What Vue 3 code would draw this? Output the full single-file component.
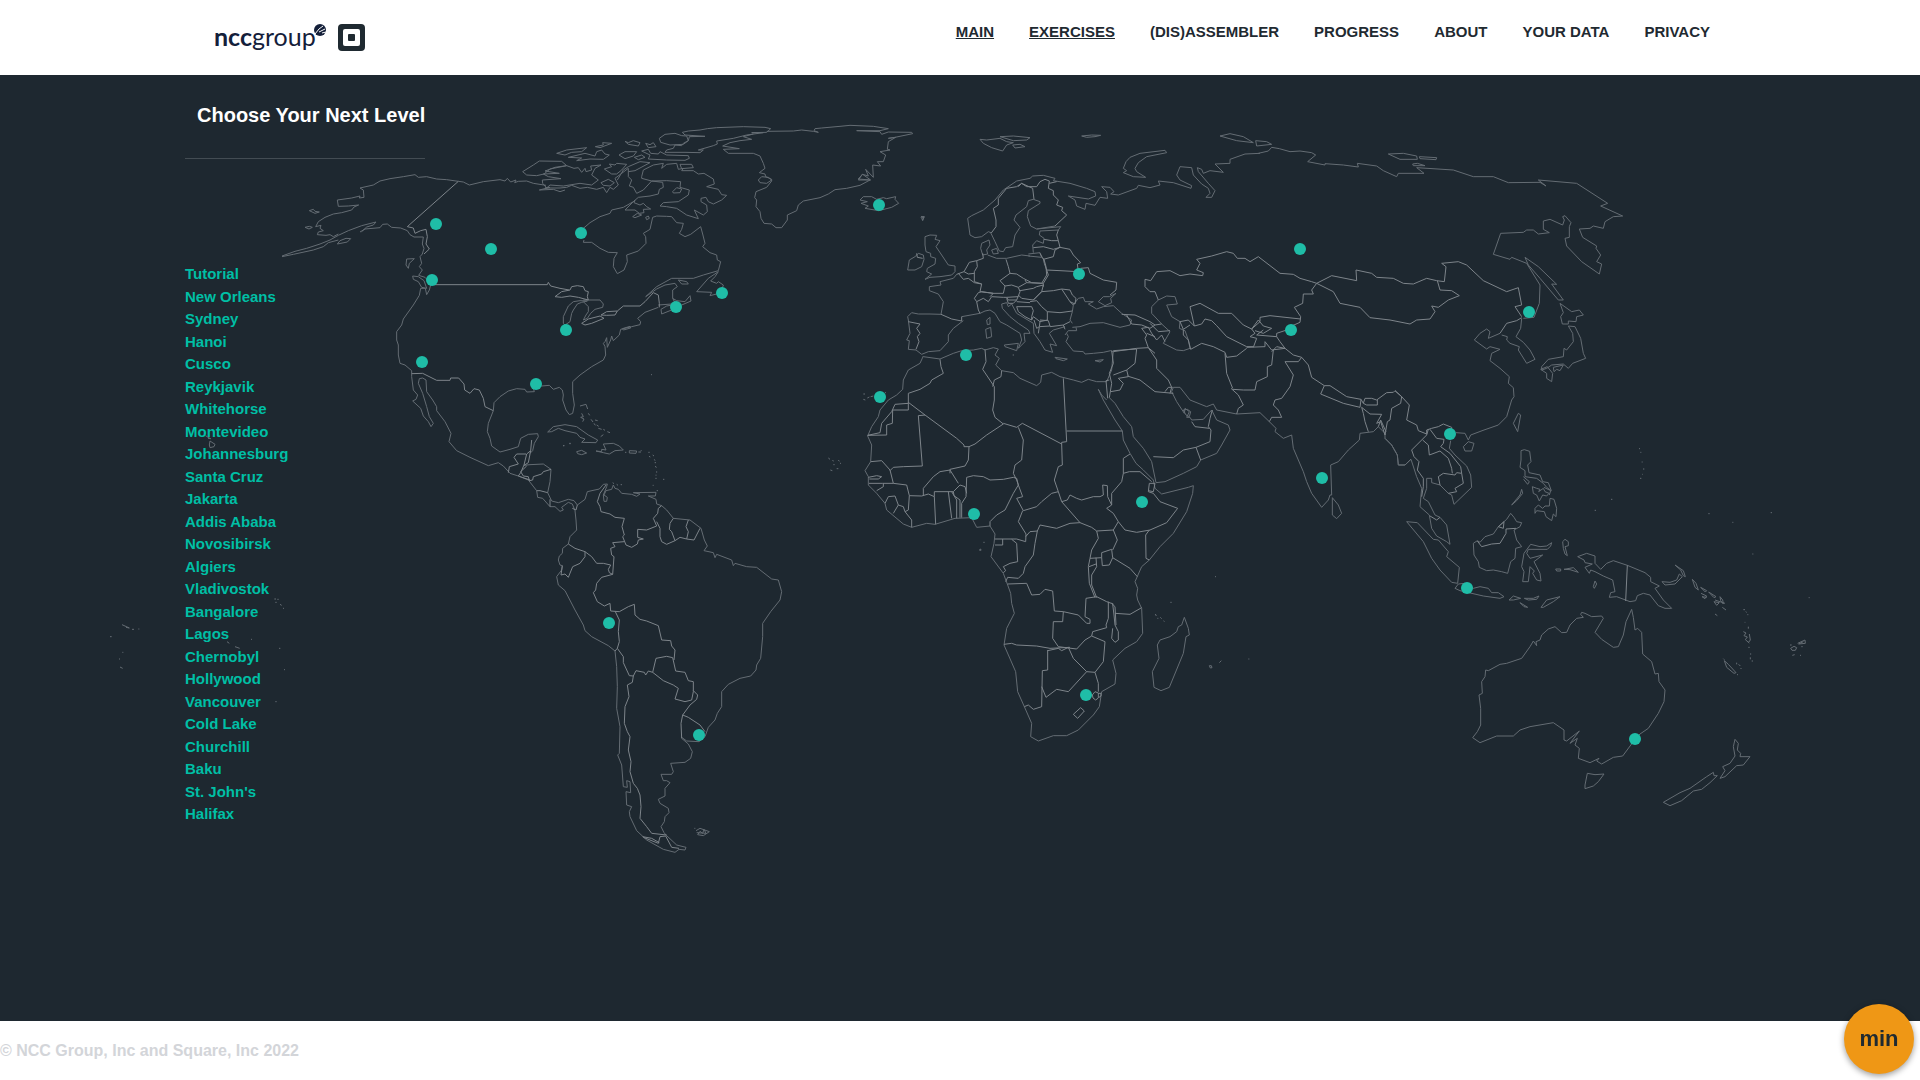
<script setup>
const navItems = [
  { label: 'MAIN', underlined: true },
  { label: 'EXERCISES', underlined: true },
  { label: '(DIS)ASSEMBLER' },
  { label: 'PROGRESS' },
  { label: 'ABOUT' },
  { label: 'YOUR DATA' },
  { label: 'PRIVACY' },
]

const levels = [
  'Tutorial', 'New Orleans', 'Sydney', 'Hanoi', 'Cusco', 'Reykjavik', 'Whitehorse',
  'Montevideo', 'Johannesburg', 'Santa Cruz', 'Jakarta', 'Addis Ababa', 'Novosibirsk',
  'Algiers', 'Vladivostok', 'Bangalore', 'Lagos', 'Chernobyl', 'Hollywood', 'Vancouver',
  'Cold Lake', 'Churchill', 'Baku', "St. John's", 'Halifax',
]

const pins = [
  [436, 224], [491, 249], [581, 233], [432, 280], [722, 293], [676, 307], [566, 330],
  [422, 362], [536, 384], [879, 205], [609, 623], [699, 735], [1079, 274], [966, 355],
  [880, 397], [974, 514], [1142, 502], [1086, 695], [1300, 249], [1291, 330], [1529, 312],
  [1450, 434], [1322, 478], [1467, 588], [1635, 739],
]

// Each region is drawn at three times map scale from its own origin.
const regions = [
  {
    name: 'north-america',
    x: 270,
    y: 110,
    coast: [
      'M36,438 L75,424 110,415 150,402 180,390 205,376 235,362 275,347 318,336 310,345 290,351 275,365 M36,440 L70,433 130,420 160,410 175,398 205,390',
      'M202,402 L210,392 228,385 242,386 232,396Z M105,352 L118,349 127,352 117,357Z M118,302 L130,298 135,304 148,306 135,310Z',
      'M270,366 L285,357 330,353 338,343 352,342 365,352 392,354 412,362 420,374 432,381 460,381 457,402 462,415 457,432 450,440 455,460 448,470 457,480 446,496 465,502 482,520',
      'M205,372 L190,380 180,374 168,376 142,374 145,366 160,362 150,355 153,346 137,350 145,335 165,322 190,312 215,308 245,300 252,291 266,285 235,288 205,289 202,270 245,264 270,258 268,264 282,262 280,240 270,234 310,225 330,213 360,206 400,200 435,194 445,202 470,200 500,207 530,209 565,214 580,216 598,225 640,215 690,209 705,213 712,205 722,216 738,210 734,218 745,214 770,213 790,220 828,226',
      'M482,525 L478,540 470,554 466,535 452,535 448,556 430,585 400,627 395,645 380,665 380,690 385,705 385,735 390,760 405,765 425,782 425,800 430,840 443,855 438,868 428,873 452,895 460,918 475,935 483,950 490,940 478,920 470,890 458,850 445,820 448,806 458,804 468,810 470,845 488,870 500,890 500,902 525,935 543,970 537,995 560,1022 600,1042 655,1067 685,1058 700,1068 720,1090',
      'M428,498 L445,500 462,512 470,535 455,532 445,515 430,508Z M410,447 L433,446 418,460 415,475 408,465Z',
      'M670,902 L672,878 690,860 715,843 740,836 765,838 770,846 793,845 790,835 815,828 838,826 850,838 868,832 877,840 880,855 878,870 888,900 898,914 908,910 913,885 908,850 908,815 930,795 965,770 1000,750 1007,735 1005,710 1000,700 1005,695 1010,683 1012,712 1022,690 1025,678 1030,692 1048,675 1052,658 1085,650 1110,644 1112,635 1103,625 1125,607 1165,592',
      'M1057,656 L1080,649 1082,654 1060,660Z',
      'M670,902 L655,940 652,965 660,985 665,1008 690,1026 720,1018 745,1010 752,985 775,973 803,971 805,980 793,1000 788,1022 780,1030',
      'M833,966 L850,950 885,944 920,950 955,975 983,990 978,998 935,997 945,987 930,982 920,970 885,962 865,955 845,965Z',
      'M930,888 L948,883 953,897 M935,910 l5,10 -8,2 10,5 -4,8 M955,910 l4,6 M963,928 l6,8 M975,930 l8,2 M972,940 l4,6 M980,945 l6,4 M985,955 l10,3 M1000,958 l5,3 M992,980 l8,-6 M1012,965 l8,3 M879,1007 h4 M898,1001 h4 M1143,794 h3',
    ],
    borders: [
      'M565,214 L412,350 430,354 435,370 452,362 468,358 472,380 468,402 478,417 462,432',
      'M490,524 L832,524 835,517 842,528 870,535 898,540',
      'M425,791 L458,790 500,811 540,811 542,804 566,804 582,822 584,840 600,850 612,836 628,840 640,865 645,890 670,902',
    ],
  },
  {
    name: 'arctic',
    x: 500,
    y: 100,
    coast: [
      'M68,215 L100,195 118,183 185,184 200,197 150,207 132,222 110,227 80,225Z',
      'M200,197 L222,205 235,203 245,217 255,205 258,215 275,210 272,198 303,195 285,205 275,225 295,240 275,255 240,250 190,258 150,255 140,264 128,250 127,240 183,236 145,230 130,222 178,220 135,213 165,202 200,197',
      'M118,270 L150,262 135,264 180,264 200,262 215,256 240,265 262,262 290,268 310,262 320,278 330,262 340,268 355,255 345,235 385,205 385,230 395,240 388,258 400,262 410,280 430,270 455,243 M118,270 L160,268 180,275 195,270',
      'M303,248 L325,238 343,248 330,258 310,256Z M313,207 L335,200 328,192 345,195 350,190 380,193 365,210 350,222 335,222Z',
      'M352,240 L370,210 385,200 420,185 450,188 405,212 385,215',
      'M425,230 L430,210 460,195 490,190 485,205 500,193 530,190 535,208 550,205 545,212 580,212 595,222 612,220 640,237 643,252 620,260 655,268 665,284 680,286 665,300 640,312 625,305 618,292 603,295 603,305 620,315 622,335 610,345 583,330 595,356 560,345 530,325 500,320 480,318 490,308 535,305 565,285 568,270 540,262 542,245 500,242 455,243 425,235Z',
      'M455,243 L488,247 490,262 478,268 475,282 450,288 415,292 400,305 370,322 335,330 330,340 300,350 270,368 250,385 M252,420 L250,427 275,427 300,445 325,457 352,458 342,475 340,500 352,521 372,510 382,485 380,465 415,453 438,430 437,410 430,400 450,388 458,352 470,348 500,349 515,350 530,368 550,370 545,388 538,400 555,410 572,403 602,380 608,402 615,430 608,440 630,458 650,465 652,480 662,485 655,512 610,525 580,535 515,535 470,560 437,590',
      'M375,330 L405,300 402,308 420,315 430,310 440,320 452,327 430,328 432,338 418,340 405,330Z M398,350 L412,340 425,345 405,353Z M437,352 L445,348 448,355 440,359Z M518,275 L530,263 545,267 540,278 520,279Z',
      'M478,115 L495,103 525,100 545,107 560,108 565,122 550,133 510,135 482,127Z',
      'M547,97 L565,93 600,90 622,86 650,83 730,80 795,82 812,86 800,97 755,98 790,98 740,105 700,115 650,123 652,132 640,137 595,150 610,150 600,158 555,157 495,157 500,150 520,145 525,135 545,137 550,130 565,122 568,110 615,109 555,105 547,97',
      'M425,153 L445,148 452,160 475,162 480,155 500,165 565,167 568,175 555,181 500,180 445,177 450,165Z M540,193 L575,193 580,203 545,206Z',
      'M357,165 L375,155 410,155 400,168 375,176Z M403,172 L425,165 435,172 415,179Z M375,124 L385,128 400,122 420,128 415,138 385,133Z M437,130 L450,134 460,128 468,140 445,143Z M286,140 L310,135 308,128 335,130 300,143Z',
      'M170,160 L200,150 260,143 245,155 215,157 195,165Z M205,172 L255,160 285,168 290,155 305,150 315,162 328,165 310,178 270,177 230,182 245,174Z',
      'M800,94 L880,93 905,90 940,94 955,97 942,92 945,86 965,84 1020,79 1050,76 1120,79 1165,86 1140,92 1070,92 1140,95 1145,103 1165,96 1235,97 1238,101 1185,112 1165,115 1187,112 1165,125 1162,148 1170,150 1140,155 1157,165 1150,185 1132,185 1142,198 1118,195 1120,232 1097,208 1105,228 1088,223 1112,240 1075,237 1088,222 1075,240 1110,240 1080,256 1040,265 1005,269 985,282 960,293 910,303 895,315 890,332 862,345 862,360 845,383 828,383 815,372 792,370 783,355 780,335 768,320 770,300 764,293 768,275 800,262 815,243 815,238 797,230 795,222 778,218 795,205 790,190 780,168 760,160 685,160 670,148 718,146 668,138 690,128 720,122 755,118 730,110 760,102',
      'M775,240 L785,230 805,232 815,240 800,250 780,248Z',
      'M1080,300 L1090,290 1115,290 1130,298 1150,293 1160,296 1187,290 1185,298 1196,310 1175,322 1136,332 1095,325 1105,318 1083,310 1102,305Z',
      'M1262,352 l10,-2 -5,10 M1264,350 l8,4',
      'M190,670 L190,650 205,618 220,605 240,602 262,603 245,607 232,612 220,630 215,640 210,665 195,675Z',
      'M250,600 L300,600 310,612 308,622 285,628 272,640 262,655 250,660 258,645 265,635 265,620 250,605',
      'M483,628 L500,618 528,613 518,595 530,602 555,605 570,587 573,603 545,615 510,632 485,642Z M437,590 L470,567 495,555 525,550 532,560 518,570 518,595 M535,540 L560,545 565,552 545,552Z',
      'M655,515 L625,535 590,575 635,577 630,587 650,582 M667,565 L670,555 655,545 650,550 632,543 645,530 655,515 M475,615 L515,612',
    ],
    borders: [
      'M165,590 L185,575 210,570 215,560 232,557 250,560 255,572 265,575 262,590 265,600 235,592 210,588 185,592Z',
      'M245,670 L265,657 300,648 312,655 275,670 255,675Z M303,645 L320,635 352,633 345,645 320,646Z',
      'M352,633 L370,618 420,618 435,605 460,578 475,585 478,610 478,622',
    ],
  },
  {
    name: 'south-america',
    x: 500,
    y: 440,
    coast: [
      'M72,76 L90,74 130,72 153,88 150,125 143,158 155,183 175,188 205,178 222,182 232,195',
      'M30,100 L55,108 85,120 110,152 113,172 128,175 150,200 165,200 180,214 190,210 185,202 205,187 217,192 225,212 228,240 230,270 210,290 205,312 188,325 187,340 178,348 175,360 180,375 187,377 185,390 170,410 175,435 195,452 225,510 250,555 255,572 275,590 325,617 345,633 350,680 352,740 350,805 360,860 358,940 353,945 365,975 370,1040 382,1042 380,1022 390,1025 392,1058 378,1055 380,1095 395,1100 388,1115 390,1130 410,1172 440,1200 490,1228 525,1237 537,1228 555,1230 558,1222 530,1215 500,1187 492,1178 483,1160 493,1145 495,1130 507,1118 505,1105 480,1090 475,1078 495,1068 495,1045 510,1028 500,1022 490,1022 483,1003 515,1003 520,995 512,970 555,967 572,955 577,935 565,912 545,895',
      'M545,892 L560,903 597,905 615,890 625,862 645,840 652,820 665,800 665,755 685,733 720,715 752,708 768,690 770,675 782,655 788,590 788,550 812,515 840,480 845,455 835,420 815,417 770,382 740,380 705,370 700,377 695,360 650,343 645,353 640,338 612,332 622,318 613,300 603,265 570,240 520,235 500,210 485,197 470,192 468,178 445,168 466,168 468,157 400,158 420,162 410,169 395,163 365,160 355,148 345,145 340,135 335,148 318,152 312,165 322,172 320,184 312,184 310,165 320,140 322,132 310,133 298,147 262,155 255,178 232,195',
      'M288,33 L305,35 305,28 318,30 310,12 340,10 358,18 370,30 345,32 328,42 310,38Z M230,35 L245,31 260,39 245,44 233,41Z M388,32 L410,33 408,40 388,39Z',
      'M375,37 h4 M415,36 h8 M422,32 h3 M445,37 h4 M447,49 l4,2 M458,45 l4,3 M463,58 l2,4 M464,68 h4 M466,78 l3,5 M470,94 v4 M468,104 v3 M466,115 h4 M489,118 h4 M458,136 h3 M470,152 h4 M338,128 l4,3 M350,133 l4,3 M362,134 h4 M189,17 h4 M208,10 h4',
      'M583,1165 h3 M588,1172 L600,1165 628,1175 610,1187 593,1184 600,1174 608,1180 612,1168 618,1180 590,1178',
      'M985,54 l5,4 M998,60 l2,4 M1000,74 h4 M1015,60 l3,4 M1010,86 h5 M991,90 l6,2',
    ],
    borders: [
      'M25,98 L28,80 55,72 42,52 50,42 78,42 M92,32 L80,42 72,75 62,98 55,108 90,120 M95,0 L92,32 85,68 72,76',
      'M153,88 L130,95 125,102 100,110 98,120 88,122 85,110 70,108 62,95 80,78 M110,152 L120,152 143,158 M150,200 L150,178 M232,195 L228,210 217,205',
      'M318,135 L300,160 292,185 300,200 303,215 330,222 345,232 373,235 366,260 373,285 368,290 378,315 395,322 412,312 415,300 430,297 413,292 413,268 440,270 470,258 460,235 473,220 475,205 485,197',
      'M470,245 L480,265 480,290 485,305 500,313 525,302 515,275 508,268 510,250 520,235 M525,302 L540,292 560,297 565,275 558,260 565,240 M560,297 L582,300 600,265',
      'M372,305 L338,308 345,320 332,325 335,345 342,350 338,403 328,398 325,388 332,375 310,370 290,370 275,350 255,335 225,325 205,312 M255,335 L255,350 240,370 218,380 205,412 195,402 183,405 187,377',
      'M338,403 L305,412 290,430 287,450 280,458 292,485 313,498 330,490 332,513 358,515 385,500 403,493 405,525 420,538 440,543 475,557 485,600 512,602 515,618 525,630 522,660 M345,513 L358,540 355,575 358,605 352,625 345,633',
      'M352,625 L370,650 370,668 388,707 400,708 408,692 433,697 437,705 445,693 458,697 468,655 500,649 518,653 527,693 555,697 565,722 580,725 580,755 575,780 555,785 525,777 535,745 520,735 490,722 458,697',
      'M580,752 L593,765 590,778 570,795 548,825 543,850 545,895 M548,825 L565,832 600,855 615,875',
      'M400,708 L397,727 382,735 387,770 375,800 373,850 382,875 390,890 385,930 393,965 390,995 400,1030 412,1045 420,1065 423,1100 420,1135 440,1160 455,1180 500,1185 M430,1192 L475,1210 480,1190 497,1188 515,1222 537,1225 M428,1190 L455,1195 478,1208',
    ],
  },
  {
    name: 'europe',
    x: 840,
    y: 120,
    coast: [
      'M420,58 L440,60 480,55 500,65 520,68 500,75 488,93 455,83 430,70Z M480,50 L520,48 570,53 560,60 520,62Z M518,75 L540,73 555,80 525,84Z M725,48 L755,45 782,46 765,50 740,52Z',
      'M850,158 L860,152 850,145 858,125 870,112 900,100 975,91 980,98 920,110 895,128 885,145 890,155 917,172 880,170Z',
      'M453,338 L445,335 425,350 405,353 390,345 383,295 395,287 430,270 465,240 490,210 530,183 570,175 578,168 610,166 645,175 640,182 690,190 740,205 765,215 767,228 745,237 685,228 705,240 710,258 735,268 738,250 765,256 780,232 803,235 800,215 785,200 810,202 822,215 812,222 835,225 890,205 895,196 930,203 960,195 955,183 1000,188 1053,205 1055,197 1020,180 1010,165 1020,140 1055,143 1060,165 1085,192 1105,205 1110,220 1098,232 1115,232 1125,212 1105,190 1075,155 1072,143 1085,148 1090,160 1110,152 1150,157 1125,132 1170,130 1170,118 1215,102 1260,100',
      'M453,340 L465,365 478,393 490,395 497,383 518,380 525,345 540,322 522,300 528,285 560,260 565,242 580,238 600,245 600,250 565,272 562,290 572,318 590,327 645,318',
      'M428,405 L422,385 425,370 447,360 450,375 440,390 443,402Z M455,390 L470,385 475,400 460,402Z M443,405 L470,415 500,415 545,405 570,408 M565,402 L600,398 605,412 565,408 M580,398 L578,375 590,362 610,370 612,355 598,345 600,333 655,330 662,320 590,327',
      'M350,463 L340,475 300,485 303,495 268,500 268,512 295,522 310,545 303,583 M365,590 L420,580 435,573 450,570 465,580 480,605 500,615 540,640 545,660 535,685 555,665 552,640 570,640 565,630 535,610 510,590 487,565 485,552 500,548 505,560 515,552 530,580 555,595 580,610 582,640 600,665 615,690 638,697 630,672 650,677 640,660 628,640 640,630 675,620',
      'M493,675 L535,670 530,692 495,680Z M437,628 L452,622 455,650 440,655Z M440,600 L450,592 450,612 442,614Z M645,712 L682,717 670,722 648,716Z M765,722 L790,719 780,726Z M518,705 h4',
      'M697,610 L690,600 697,575 700,555 715,535 730,532 735,545 760,545 745,552 770,567 790,560 820,557 845,580 875,600 870,615 840,622 790,608 750,610 720,620 697,622 M775,545 L790,530 808,530 828,520 812,535 815,548 795,557 775,545',
      'M675,645 L685,632 710,632 708,622 M680,640 L685,650 678,665 700,693 730,695 735,702 760,700 790,697 812,692 820,695 M820,692 L815,750',
      'M965,612 L935,580 935,560 955,540 980,528 1005,530 1012,552 980,555 995,590 1020,605 1018,625 1035,632 1045,660 1050,685 1030,692 1010,690 970,670 990,635 965,612',
      'M303,583 L270,582 235,582 215,578 203,590 205,600 210,640 200,660 208,662 205,688 228,690 245,703 265,695 300,692 325,665 325,645 340,625 370,602',
      'M255,350 L270,345 290,346 285,358 300,362 288,380 305,405 325,435 345,438 345,455 335,465 300,470 270,472 255,478 275,462 260,455 262,445 285,432 287,415 272,410 272,400 258,395 255,375Z M203,450 L208,420 225,410 235,400 250,405 252,418 245,440 225,450Z',
      'M250,710 L300,717 340,700 365,692 400,690 425,685 435,690 460,683 475,687 465,705 478,715 467,735 485,752 520,758 540,775 590,797 602,787 605,765 635,757 660,770 700,780 725,787 745,778 770,785 800,785 815,750',
      'M70,822 h5 M70,838 l6,2 M82,834 l6,-3 M92,830 l8,-2 M135,818 h3 M243,290 l10,0 -5,12 -3,-8',
    ],
    borders: [
      'M453,340 L468,320 468,300 460,265 475,255 475,235 500,205 530,200 545,190 578,205 582,238 M535,200 L545,190 560,200 590,200 600,185 615,178 628,183 625,205 640,212 640,225 655,240 650,255 668,262 665,272 680,285 645,318 M628,190 L650,185',
      'M230,400 L232,412 248,415 M655,330 L650,345 655,362 635,362 612,358 M655,362 L660,382 640,388 610,380 580,383 M660,382 L645,390 640,410 610,418 600,400 M660,382 L690,388 700,405 722,428 712,432 715,455 660,452 620,450 613,430 610,415',
      'M498,418 L505,440 510,460 530,462 550,475 575,488 605,490 620,465 618,440 612,418 M410,422 L412,440 403,455 403,485 425,492 420,515 460,520 490,520 495,498 480,482 510,460 M428,400 L430,415 410,422 388,427 372,455 350,463 M372,455 L385,462 403,460 M355,460 L370,478 385,475 403,488',
      'M403,488 L425,492 M303,583 L335,597 365,603 365,590 M420,580 L415,570 410,545 403,535 415,518 425,515 460,520 M410,545 L430,535 445,545 455,530 490,532 500,532 535,530 M460,520 L450,530 M495,498 L515,495 535,502 560,488 555,480 M535,502 L540,515 530,540 505,540 500,532 M540,512 L580,505 590,500 610,495 605,515 580,540 545,535 535,525 M560,488 L610,490 610,500 M500,535 L505,550 520,550 530,540',
      'M530,560 L575,560 580,572 575,590 575,600 555,590 535,575Z M570,545 L590,542 605,560 622,575 622,600 600,605 580,590 575,600 M600,605 L598,620 630,618 625,602 600,600 M622,575 L660,578 697,573 M630,620 L670,615 690,605 M670,615 L675,628 M582,600 L590,625 598,620 595,640 M530,545 L570,548',
      'M605,515 L640,512 665,507 690,545 700,555 M580,540 L605,515 M665,507 L690,510 697,525 708,535 705,552 690,545 M722,445 L745,443 750,460 790,480 830,487 828,510 810,525 M620,450 L625,465 610,490',
      'M845,583 L885,585 930,605 945,615 965,612 M860,585 L875,612 905,615 930,625 945,615 M905,625 L920,645 915,655 925,683 945,700 M905,625 L925,622 935,640 950,660 965,645 975,665 M920,640 L945,650 M820,695 L840,692 890,685 925,683 M930,610 L955,635 990,632',
      'M205,605 L240,612 230,625 240,640 232,650 237,665 228,688',
    ],
  },
  {
    name: 'africa-and-arabia',
    x: 840,
    y: 330,
    coast: [
      'M250,78 L240,100 205,120 190,150 188,178 170,195 145,210 120,240 115,260 95,290 83,318 95,345 92,395 75,422 85,440 85,465 110,490 135,520 140,540 190,582 215,592 260,580 285,583 345,565 395,563 410,592 450,588 465,612 462,640 453,680 490,730 503,765 512,790 515,820 523,850 500,895 492,945 527,1025 533,1085 553,1130 575,1180 572,1220 595,1233 640,1217 680,1217 715,1200 760,1155 778,1130 785,1085 825,1062 828,1030 818,990 855,955 890,935 908,910 905,835 893,810 890,795 893,775 885,755 905,710 928,690 960,650 1000,610 1040,545 1058,490 1060,467 1045,472 965,492 945,475 940,450 910,420 888,400 870,370 850,330 847,303 825,270 790,210 775,178 785,195 800,210',
      'M808,203 L825,220 850,260 875,290 880,320 910,355 935,395 940,420 948,458 975,455 1030,430 1070,410 1082,390 1130,370 1145,345 1170,300 1165,285 1130,270 1115,240 1090,268 1055,270 1050,262 1040,262 1048,245 1035,235 1033,250 1010,215 995,185 1000,172 1020,172 1050,210 1100,230 1120,222 1130,240 1190,252 1260,248',
      'M1033,862 L1045,895 1048,915 1038,920 1030,970 988,1072 963,1082 942,1072 937,1025 957,985 952,945 960,930 990,920 1010,905 1015,890 1025,885Z',
      'M430,637 h4 M418,660 l4,-3 1,4Z M1125,740 h3 M991,817 h4 M946,852 l3,6 M952,865 h3 M961,862 l4,4 M971,872 l2,3 M1108,1007 l6,0 2,6 -5,1Z M1138,998 l6,-6 M1225,987 h3 M0,400 h3',
    ],
    borders: [
      'M820,62 L890,57 885,100 860,120 820,135 M860,120 L865,140 835,145 850,160 840,180 812,185 M815,62 L820,100 808,130 815,160 808,203 M808,150 L798,152 803,205 M862,138 L900,150 945,185 1000,190 M975,185 L985,172 998,172 M925,53 L950,90 950,115 985,150 995,172 990,190',
      'M940,380 L1000,383 1030,360 1068,352 1110,335 1113,300 1105,290 1110,265 1117,240 M1068,352 L1082,390 M1055,275 L1065,290 1108,295',
      'M300,88 L303,110 310,130 275,150 270,160 240,178 205,190 205,240 158,240 157,280 140,285 140,315 83,316 M165,223 L205,220 M165,223 L155,245 125,280 120,308 83,316',
      'M205,217 L255,255 350,325 372,345 372,350 387,350 405,342 440,315 490,282 465,262 458,240 463,210 463,170 428,118 438,95 435,58 M485,122 L483,140 463,150 458,170',
      'M490,280 L530,292 547,280 665,342 665,337 680,335 670,145 M680,303 L847,303 M255,255 L235,257 247,408 190,410 160,412 150,422 M387,350 L385,390 375,408 330,418 330,430',
      'M535,292 L550,330 545,390 525,405 520,430 530,450 M665,342 L667,405 655,410 643,450 655,485 665,515 682,510 690,495 710,505 725,510 760,500 780,500 790,495 788,465 802,467 803,500 815,525',
      'M655,485 L635,490 605,515 590,530 550,542 530,505 548,500 535,465 530,445 520,442 490,448 450,450 430,440 400,437 380,442 378,500 365,520 365,563',
      'M92,395 L125,392 150,420 160,460 128,460 87,460 M85,442 L110,437 125,440 115,447 88,447 M160,460 L200,465 208,497 245,498 265,492 283,500 283,485 340,485 360,465 375,470 M355,460 L330,420 300,425 280,440 250,475 250,497',
      'M110,482 L130,470 130,460 M135,520 L145,500 165,498 175,525 160,550 M175,525 L190,530 195,545 215,570 215,592 M208,497 L205,540 195,545 M283,500 L287,583 M325,485 L335,565 M335,485 L350,510 350,565 M340,485 L342,497 360,510 360,563 M375,470 L380,490',
      'M530,450 L535,465 520,490 495,540 470,555 450,575 450,588 M548,542 L535,575 558,612 557,635 530,627 465,627 M557,620 L570,605 592,603 600,585 650,595 690,580 720,578 M665,515 L700,555 720,578',
      'M720,578 L755,592 770,603 820,600 835,575 820,550 800,535 815,525 815,490 845,455 850,430 850,385 870,372 M850,430 L868,425 900,425 935,455 M925,485 L940,490 960,515 1013,535 980,578 930,600 890,607 855,600 835,575 M928,600 L917,615 918,685 928,690 M925,485 L928,460 945,460 940,485 925,482',
      'M820,600 L832,630 818,660 M818,683 L870,715 892,740 M770,603 L775,625 755,660 750,685 785,683 785,668 815,658 818,683 808,705 787,707 785,683 M750,685 L745,710 748,760 765,803 M768,683 L770,710 755,735 755,765 770,803 M747,710 L768,702',
      'M592,603 L585,640 580,675 555,710 550,730 535,745 503,742 497,755 M465,645 L488,645 488,627 M515,628 L530,640 533,695 510,700 490,710 497,722 490,728 M503,762 L560,760 575,795 600,793 615,778 638,783 643,843 670,845 715,855 740,880 750,880 750,868 735,860 738,805 770,800 800,815 820,822',
      'M670,845 L668,875 640,875 638,925 655,950 710,957 735,930 755,918 758,905 800,893 798,885 805,865 805,815 M818,822 L822,855 825,885 835,905 835,930 825,937 815,925 818,895 M825,850 L870,853 905,833 M815,820 L825,830 828,885',
      'M492,943 L515,940 530,945 590,948 630,955 690,952 M623,962 L655,955 665,962 685,952 700,985 740,1025 765,1027 790,995 795,935 755,918 M623,960 L623,1020 607,1022 605,1130 580,1138 565,1125 553,1130 M605,1070 L618,1102 650,1078 685,1085 740,1025 M765,1027 L775,1060 775,1085 M757,1095 l8,-10 10,4 0,15 -8,6 -8,-6Z M775,1090 l8,0 0,8 -6,4 M700,1153 L722,1133 733,1143 713,1165Z',
    ],
  },
  {
    name: 'asia',
    x: 1130,
    y: 120,
    coast: [
      'M385,100 L415,93 425,82 448,86 480,95 510,93 545,98 557,105 533,125 585,135 585,131 640,135 685,141 682,130 740,138 760,152 800,170 805,160 882,160 860,143 970,150 1030,170 1090,170 1135,188 1230,187 1248,198 1225,180 1340,190 1433,250 1412,258 1478,288 1450,290 1425,305 1420,325 1390,318 1380,325 1348,327 1358,352 1400,378 1398,385 1412,405 1400,425 1415,432 1408,462 1355,425 1310,378 1305,355 1318,352 1318,320 1323,308 1305,287 1298,290 1303,300 1298,315 1260,298 1240,303 1240,328 1258,338 1225,342 1210,330 1190,330 1180,337 1112,340 1090,403 1140,418 1145,412 1190,430 1230,495 1228,550 1212,592 1180,595',
      'M1185,412 L1225,440 1280,493 1265,492 1300,540 1285,540 1230,475 1195,435Z M1290,550 L1325,575 1348,570 1360,585 1340,590 1338,605 1315,603 1315,612 1297,612 1292,590 1300,578Z M1315,618 L1335,620 1352,655 1360,700 1367,715 1328,730 1315,745 1300,732 1265,735 1250,745 1235,750 1235,740 1255,718 1300,710 1302,685 1310,690 1330,665 1328,640Z M1232,748 L1252,740 1268,760 1265,785 1250,775 1250,760Z M1270,742 L1300,735 1290,752 1280,748 1272,755Z',
      'M270,48 L300,41 340,50 370,68 320,62Z M377,62 L410,65 425,73 380,78Z M775,102 L820,100 860,108 862,118 810,118Z M868,110 L920,113 918,119 870,116Z M848,132 L862,130 885,137 850,137Z',
      'M390,878 L418,905 438,925 435,935 460,955 485,945 490,985 520,1055 530,1085 545,1120 575,1162 595,1140 600,1125 605,1125 602,1035 625,1025 655,990 688,960 690,940 730,935 745,920 765,940 765,955 785,975 802,1005 805,1035 825,1035 843,1017',
      'M978,938 L1005,940 1015,960 1022,945 1062,930 1105,915 1130,890 1145,840 1152,830 1150,803 1135,790 1138,770 1110,745 1080,722 1085,700 1110,688 1080,680 1070,687 1033,660 1050,640 1070,627 1080,635 1075,655 1110,640 M1175,595 L1172,625 1158,650 1180,667 1200,690 1215,718 1190,730 1165,690 1168,680 1140,670 1130,660 1132,650 1115,645',
      'M1000,980 L1015,965 1032,970 1025,993 1005,993Z M1150,910 L1165,880 1172,885 1163,935Z M607,1133 L625,1155 635,1180 620,1196 607,1185Z M160,870 L172,868 182,875 178,890 168,885Z',
    ],
    borders: [
      'M85,540 L75,515 60,515 45,500 45,478 62,482 80,455 120,452 150,467 180,462 218,467 220,458 200,450 210,430 200,418 245,408 290,395 310,400 322,415 345,415 360,425 385,410 450,460 490,463 510,475 545,485 560,490 545,510 550,522 520,522 518,550 493,562 512,590 510,607',
      'M560,490 L605,467 680,482 678,450 725,460 740,472 790,475 820,490 850,492 890,475 920,482 943,485 948,440 935,430 985,425 1010,435 1060,482 1130,515 1165,503 1175,555 1155,560 1175,590',
      'M560,490 L610,515 630,550 690,562 720,593 780,600 840,612 860,600 900,597 915,575 905,558 925,562 955,540 988,527 965,512 930,510 922,482 M1110,640 L1130,610 1160,602 1175,593',
      'M180,560 L210,550 265,580 305,580 340,615 365,627 390,605 390,592 420,587 512,597 M180,560 L193,618 215,612 225,597 245,602 260,617 290,650 350,680 370,680 M193,618 L175,600 150,605 160,628 180,615',
      'M365,627 L375,640 360,650 380,655 370,682 M365,627 L385,600 400,618 425,625 400,640 375,632 M400,630 L380,645 440,650 440,640 470,630 M440,650 L450,665 465,685 M350,682 L405,680 405,665 425,690 465,685 M510,607 L485,618 M425,695 L440,680 465,685',
      'M182,688 L215,670 250,680 285,697 290,712 320,708 350,685 M285,700 L290,760 308,805 M308,808 L340,810 375,810 380,785 412,770 412,740 425,735 430,690 M303,805 L325,825 340,855 325,865 320,882 M182,688 L175,660 160,645 160,630',
      'M465,685 L490,705 515,712 505,725 465,725 490,765 480,800 455,835 435,840 430,855 445,870 455,892 425,892 418,905',
      'M515,712 L535,735 545,772 583,797 600,797 650,830 693,838 700,850 705,835 725,835 740,840 770,818 790,817 795,812 815,830 M583,797 L572,822 640,850 690,862 693,838 M700,850 L710,855 742,855 742,840 M695,862 L700,880 705,905 715,935 M695,862 L720,882 755,883 740,910 752,905 765,945 M795,812 L815,830 812,850 785,865 780,900 772,905 765,945 M745,920 L752,900 768,935 M815,830 L838,855 830,900 860,915 865,932 890,942 890,930 905,925 925,920 940,912 965,922 965,930',
    ],
  },
  {
    name: 'oceania',
    x: 1340,
    y: 380,
    coast: [
      'M135,175 L155,195 172,225 175,255 195,255 213,238 230,290 245,325 240,380 268,405 275,445 290,468 320,485 330,493 320,435 300,412 285,405 265,365 250,355 260,325 260,295 275,295 275,308 300,315 325,340 335,345 342,373 395,322 392,285 380,258 345,225 328,205 332,182',
      'M200,425 L232,428 280,478 295,480 325,515 320,530 358,562 353,610 335,607 300,570 275,535 250,485Z M355,612 L345,625 360,632 430,648 480,655 492,650 475,638 455,638 445,625 420,620 400,625 375,610Z',
      'M400,490 L412,482 420,487 435,470 460,462 475,440 500,418 512,400 522,412 530,425 545,428 540,440 522,450 530,480 545,500 527,505 525,535 512,545 503,580 485,575 460,570 440,572 418,562 415,545 402,525Z',
      'M545,560 L552,520 572,493 600,500 620,498 635,488 632,498 622,508 565,508 560,520 570,535 608,525 582,545 600,580 603,603 590,600 578,580 583,573 570,560 565,605 548,605 552,575Z',
      'M668,485 L675,478 685,485 685,497 675,500 682,527 675,522 670,505Z M672,568 L700,563 715,577 690,569Z M647,567 l15,0 0,6 -12,0Z M507,660 L520,648 542,655 520,660Z M553,655 L580,655 597,648 590,658 565,660Z M540,668 L563,682 552,680Z M603,682 L620,660 660,650 640,665 610,682Z M760,620 L765,603 770,612 763,625Z',
      'M713,530 L740,520 765,528 765,550 782,568 800,550 820,542 862,556 915,578 932,592 932,605 958,618 945,625 970,660 995,685 975,685 955,677 930,645 910,640 892,647 887,662 870,665 830,650 808,652 812,638 825,635 818,600 790,588 765,575 752,570 748,580 735,562 757,552 735,548 732,540Z',
      'M966,605 L990,607 1010,600 1018,582 1027,590 1005,612 975,615Z M1005,555 L1030,572 1036,590 1030,587 1022,570Z M1057,598 L1068,610 1075,630 1065,622Z M1082,622 L1100,632 1096,636Z M1083,640 L1100,648 1095,656 1086,650 1100,652 M1106,636 L1128,650 1122,653Z M1122,665 L1138,668 1130,676Z M1140,650 L1148,660 1150,672 1142,662Z M1147,682 L1158,690 M1125,702 L1132,707 M1125,660 L1155,670',
      'M1210,689 h5 M1217,695 l3,2 M1222,704 h3 M1214,727 h2 M1225,740 v6 M1210,755 l8,4 -6,8 10,4 -6,8 12,10 M1228,762 l3,18 -6,8 M1225,802 h4 M1232,820 v4 M1231,832 v6 M1235,843 h4 M1150,836 l3,3 M1153,842 L1165,853 1188,878 1182,880 1160,862Z M1190,848 v5 M1196,853 l5,5 M1203,864 v3 M1191,884 h3 M1350,795 h5 M1352,805 l10,-6 8,4 -4,8 -10,0Z M1373,790 L1395,780 1396,790 1376,792 1390,785 M1357,826 l7,-2 M1380,826 h3 M1384,800 h4',
      'M543,212 L553,209 569,214 573,245 563,255 567,278 600,285 608,305 625,308 634,332 620,322 610,310 590,295 555,290 555,272 540,262 543,240Z M550,290 l18,15 -5,8 -12,-15 M577,320 L590,325 600,328 596,335 610,325 615,335 627,340 620,348 608,345 598,363 590,345 580,340Z M612,322 L632,332 628,345 M585,400 L585,385 595,375 608,385 615,378 628,378 630,355 642,358 650,385 648,410 640,402 635,422 618,410 613,395 590,392Z M515,375 L540,345 545,328 548,340 530,362Z',
      'M725,697 L735,700 755,710 785,708 790,715 765,757 785,778 820,802 835,800 850,765 858,725 875,688 880,712 885,750 893,745 905,757 908,822 935,845 945,882 955,880 957,905 975,930 972,965 955,1000 925,1045 900,1062 885,1078 848,1128 820,1132 785,1152 770,1143 777,1135 750,1148 715,1135 718,1105 705,1095 712,1075 690,1090 718,1053 680,1083 672,1080 672,1050 640,1028 570,1040 540,1050 520,1068 470,1068 420,1088 398,1073 412,1055 422,1035 422,985 417,945 427,940 425,905 435,890 437,870 445,872 480,853 500,850 545,835 570,800 580,783 590,797 588,785 600,780 605,765 625,747 645,740 665,758 680,757 690,735 710,715 730,712 722,703Z',
      'M742,1180 L765,1184 792,1182 775,1205 760,1218 735,1226 735,1215Z M1185,1078 L1195,1090 1192,1110 1202,1120 1200,1130 1230,1130 1210,1155 1190,1157 1155,1190 1140,1195 1155,1172 1148,1160 1170,1150 1185,1128 1180,1100Z M1120,1177 L1122,1187 1132,1187 1110,1208 1085,1228 1060,1233 1025,1262 990,1277 970,1267 1020,1238 1050,1225 1100,1190Z',
      'M897,206 h3 M901,217 h3 M905,246 h3 M909,267 h4 M906,283 h2 M900,295 h4 M813,358 h4 M764,391 h4 M1105,401 h4 M1177,427 h3 M1292,398 h4 M1237,522 h3 M1406,653 h3',
    ],
    borders: [
      'M260,165 L265,148 M260,165 L245,180 215,210 222,230 237,245 232,270 250,295 250,320 245,350 M248,180 L265,195 268,225 300,213 325,235 335,265 337,280 M270,148 L290,175 312,178 310,190 302,200 330,220 362,260 365,280 M300,315 L295,290 310,280 345,285 350,278 365,280 370,310 345,325 350,335 325,340 M270,408 L290,420 300,412',
      'M412,483 L425,500 455,492 480,490 498,460 498,447 528,445 M475,440 L492,425 490,445Z M862,556 L857,663',
    ],
  },
  {
    name: 'pacific-islands',
    x: 100,
    y: 250,
    coast: [
      'M316,557 l6,3 M322,561 l10,5 -8,-1 M330,573 L345,583 342,590 330,593 328,585Z',
      'M523,1047 h5 M532,1048 h4 M526,1057 h4 M540,1063 l5,3 M549,1075 h3 M30,1160 h5 M66,1124 L88,1134 78,1132 M96,1138 h6 M115,1137 h3 M67,1207 h3 M57,1227 h3 M60,1251 l8,4 M381,1175 l7,5 M405,1190 l14,5 M453,1168 h3 M537,1195 h4 M552,1259 h3 M526,1355 h4',
    ],
    borders: [],
  },
]
</script>

<template>
  <div class="page">
    <header class="site-header">
      <a class="brand" href="#" aria-label="NCC Group and Square">
        <svg class="brand-logo" width="160" height="40" viewBox="0 0 160 40" aria-hidden="true">
          <text class="brand-text" x="4" y="28"><tspan class="brand-strong">ncc</tspan>group</text>
          <circle cx="110" cy="12" r="6" fill="#14203a" />
          <path d="M105,16 L109,11 113,8 M109,14 L115,11 M112,15 L116,14" fill="none" stroke="#fff" stroke-width="1" />
          <rect x="128" y="6" width="27" height="27" rx="4" fill="#1f2a31" />
          <rect x="133" y="11" width="17" height="17" rx="2" fill="#fff" />
          <rect x="138" y="16" width="7" height="7" rx="1" fill="#1f2a31" />
        </svg>
      </a>
      <nav class="site-nav" aria-label="Primary">
        <a
          v-for="item in navItems"
          :key="item.label"
          class="nav-link"
          :class="{ underlined: item.underlined }"
          href="#"
        >{{ item.label }}</a>
      </nav>
    </header>

    <main class="world">
      <section class="levels">
        <h1 class="levels-title">Choose Your Next Level</h1>
        <ul class="level-list">
          <li v-for="level in levels" :key="level">
            <a class="level-link" href="#">{{ level }}</a>
          </li>
        </ul>
      </section>

      <svg class="map" viewBox="0 75 1920 946" role="img" aria-label="World map of levels">
        <g
          v-for="region in regions"
          :key="region.name"
          :transform="`translate(${region.x} ${region.y}) scale(${1 / 3})`"
        >
          <path class="coast" :d="region.coast.join(' ')" />
          <path class="border" :d="region.borders.join(' ')" />
        </g>
        <circle v-for="pin in pins" :key="pin.join()" class="pin" :cx="pin[0]" :cy="pin[1]" r="6" />
      </svg>
    </main>

    <footer class="site-footer">© NCC Group, Inc and Square, Inc 2022</footer>
    <button class="min-button" type="button">min</button>
  </div>
</template>

<style>
body {
  margin: 0;
  background: #fff;
}
</style>

<style scoped>
.page {
  display: flex;
  flex-direction: column;
  min-height: 100vh;
  font-family: "Liberation Sans", Arial, sans-serif;
  font-weight: 700;
}

.site-header {
  display: flex;
  justify-content: space-between;
  align-items: flex-start;
  box-sizing: border-box;
  height: 75px;
  padding: 18px 210px 0;
}

.brand-logo {
  display: block;
}

.brand-text {
  font: 400 25px Lato, sans-serif;
  fill: #14203a;
}

.brand-strong {
  font-weight: 700;
}

.site-nav {
  display: flex;
  gap: 35px;
  padding-top: 5px;
}

.nav-link {
  font-size: 15px;
  line-height: 18px;
  color: #1f2a31;
  text-decoration: none;
}

.nav-link.underlined {
  text-decoration: underline;
}

.world {
  display: grid;
  flex: 1;
  background: #1e2830;
}

.levels,
.map {
  grid-area: 1 / 1;
}

.map {
  display: block;
  width: 100%;
  pointer-events: none;
}

.levels {
  justify-self: start;
  padding: 28px 0 0 185px;
}

.levels-title {
  margin: 0 0 104px;
  padding: 0 0 30px 12px;
  border-bottom: 1px solid #434c53;
  font-size: 20px;
  line-height: 25px;
  color: #fff;
}

.level-list {
  margin: 0;
  padding: 0;
  list-style: none;
  font-size: 15px;
  line-height: 1.5;
}

.level-link {
  color: #00bfa5;
  text-decoration: none;
}

.coast,
.border {
  fill: none;
  stroke-width: 1px;
  stroke-linejoin: round;
  vector-effect: non-scaling-stroke;
}

.coast {
  stroke: #646c73;
}

.border {
  stroke: #7d848a;
}

.pin {
  fill: #1fbda7;
}

.site-footer {
  box-sizing: border-box;
  height: 59px;
  padding-top: 20px;
  font-size: 16px;
  line-height: 20px;
  color: #d3d5d9;
}

.min-button {
  position: fixed;
  right: 6px;
  bottom: 6px;
  width: 70px;
  height: 70px;
  padding: 0;
  border: 0;
  border-radius: 50%;
  background: #ef9715;
  box-shadow: 0 2px 6px rgba(0, 0, 0, 0.4);
  font: 700 22px "Liberation Sans", Arial, sans-serif;
  color: #1f2a31;
}
</style>
